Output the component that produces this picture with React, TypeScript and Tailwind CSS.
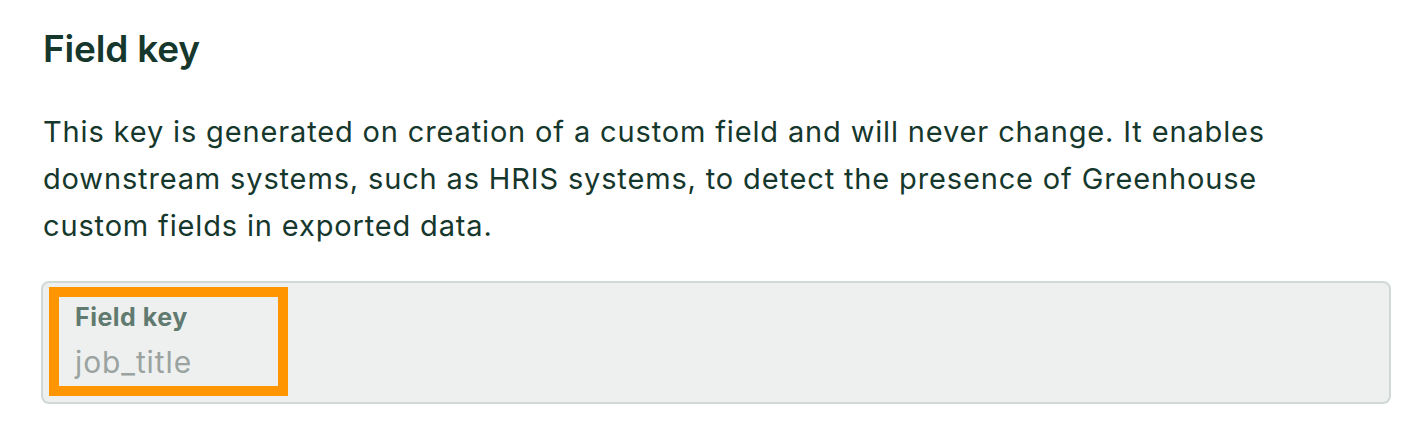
export default function App() {
  return (
    <div className="w-[1418px] h-[424px] bg-white pl-[43px] pr-[27px] pt-[25px]" style={{ fontFamily: "Inter, 'Liberation Sans', sans-serif" }}>
      <h2 className="text-[37px] leading-[48px] font-semibold tracking-[-0.2px] text-[#15372c]">Field key</h2>
      <p className="mt-[35px] text-[29px] leading-[47px] tracking-[0.85px] text-[#15372c]">
        This key is generated on creation of a custom field and will never change. It enables
        <br />
        downstream systems, such as HRIS systems, to detect the presence of Greenhouse
        <br />
        custom fields in exported data.
      </p>
      <div className="mt-[32px] ml-[-2px] h-[123px] rounded-[8px] border-2 border-[#d0d9d6] bg-[#eef0ef] pl-[6px] pt-[4px]">
        <div className="w-[239px] h-[109px] border-[10px] border-[#ff9500] pl-[16px] pt-[5px]">
          <div className="text-[25px] leading-[30px] font-bold tracking-[0.5px] text-[#617a70]">Field key</div>
          <div className="mt-[12px] text-[30px] leading-[36px] tracking-[0.9px] text-[#9aa3a0]">job_title</div>
        </div>
      </div>
    </div>
  );
}
